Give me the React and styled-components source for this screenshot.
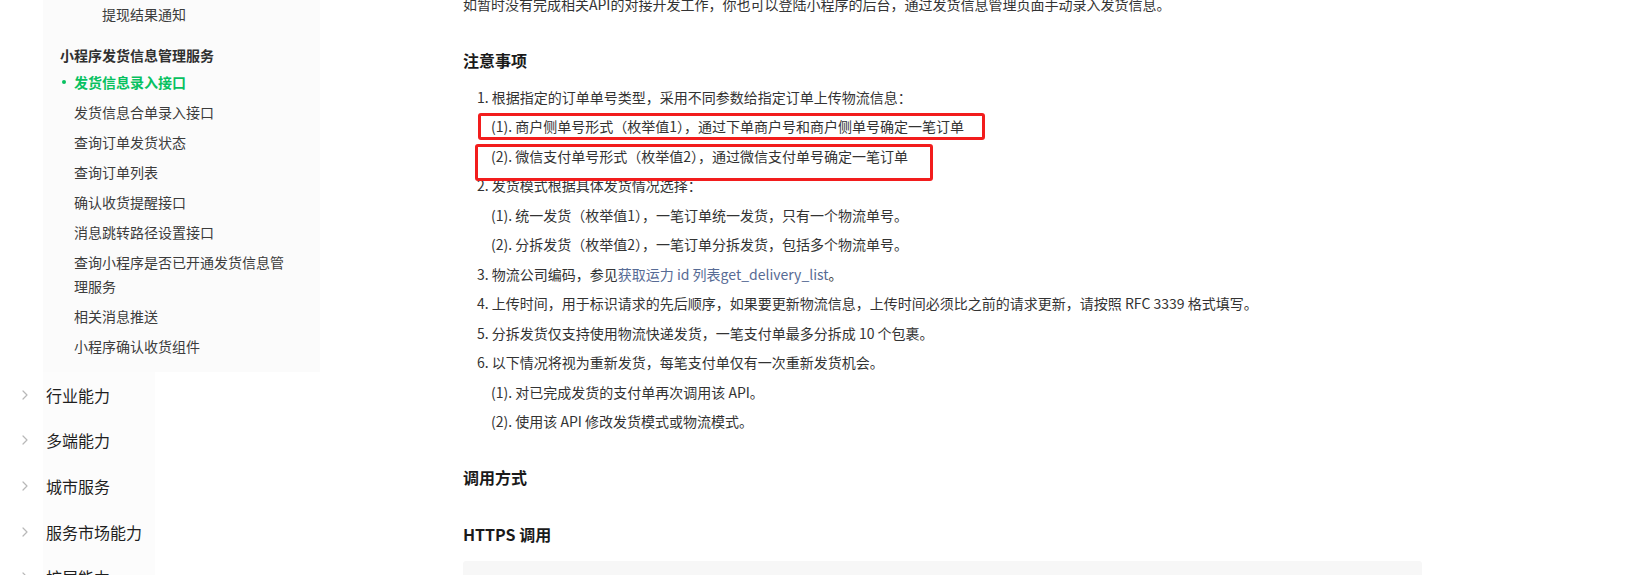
import React from "react";
import styled, { createGlobalStyle } from "styled-components";

const GlobalStyle = createGlobalStyle`
  html, body {
    margin: 0;
    padding: 0;
    background: #ffffff;
  }
  body {
    font-family: "Noto Sans CJK SC", "Microsoft YaHei", sans-serif;
    color: #333333;
    overflow: hidden;
  }
  * {
    box-sizing: border-box;
  }
`;

const Page = styled.div`
  display: flex;
  width: 1636px;
  height: 575px;
  overflow: hidden;
`;

const Sidebar = styled.nav`
  width: 320px;
  flex: none;
  display: flex;
  flex-direction: column;
`;

const SubPanel = styled.div`
  margin: -1px 0 0 43px;
  padding: 0 0 11px;
  background: #fbfbfb;
`;

const SubGroup = styled.div`
  margin-top: ${(p) => p.$top || 0}px;
`;

const GroupTitle = styled.div`
  padding-left: 17px;
  font-size: 14px;
  line-height: 24px;
  font-weight: 700;
  color: #303030;
`;

const SubLink = styled.div`
  position: relative;
  padding: 3px 30px 3px ${(p) => p.$indent}px;
  font-size: 14px;
  line-height: 24px;
  font-weight: ${(p) => (p.$active ? 700 : 400)};
  color: ${(p) => (p.$active ? "#07c160" : "#3c3c3c")};

  &::before {
    content: "";
    display: ${(p) => (p.$active ? "block" : "none")};
    position: absolute;
    left: 19px;
    top: 50%;
    width: 4px;
    height: 4px;
    margin-top: -2px;
    border-radius: 50%;
    background: #07c160;
  }
`;

const TopList = styled.div`
  display: flex;
  flex-direction: column;
  background: linear-gradient(
    90deg,
    #ffffff 0 43px,
    #fcfcfc 43px 155px,
    #ffffff 155px
  );
`;

const TopItem = styled.div`
  display: flex;
  align-items: center;
  height: 45.6px;
  flex: none;
  padding-left: 22px;
  gap: 18px;
  font-size: 16px;
  color: #1f1f1f;
`;

const Chevron = styled.svg`
  width: 6px;
  height: 10px;
  flex: none;
`;

const Main = styled.main`
  flex: 1;
  padding-left: 143px;
`;

const Content = styled.div`
  width: 959px;
`;

const Para = styled.p`
  margin: -10px 0 0;
  font-size: 14px;
  line-height: 29.5px;
  color: #333333;
  white-space: nowrap;
`;

const Heading = styled.h3`
  margin: ${(p) => p.$top}px 0 0;
  font-size: 16px;
  line-height: 24px;
  font-weight: 700;
  color: #1a1a1a;
`;

const ListBlock = styled.div`
  position: relative;
  margin-top: 11px;
`;

const Line = styled.div`
  padding-left: ${(p) => (p.$sub ? 28 : 14)}px;
  font-size: 14px;
  line-height: 29.5px;
  color: #333333;
  white-space: nowrap;
`;

const Link = styled.a`
  color: #576b95;
  text-decoration: none;
`;

const Mark = styled.div`
  position: absolute;
  left: ${(p) => p.$x}px;
  top: ${(p) => p.$y}px;
  width: ${(p) => p.$w}px;
  height: ${(p) => p.$h}px;
  border: 3px solid #f21d1d;
  border-radius: 3px;
  pointer-events: none;
`;

const CodeBlock = styled.div`
  margin-top: 15px;
  height: 120px;
  background: #f7f7f7;
  border-radius: 3px;
`;

const ChevronIcon = () => (
  <Chevron viewBox="0 0 6 10">
    <polyline
      points="1,1 5,5 1,9"
      fill="none"
      stroke="#b8b8b8"
      strokeWidth="1.2"
      strokeLinecap="round"
      strokeLinejoin="round"
    />
  </Chevron>
);

const subItems = [
  { text: "发货信息录入接口", active: true },
  { text: "发货信息合单录入接口" },
  { text: "查询订单发货状态" },
  { text: "查询订单列表" },
  { text: "确认收货提醒接口" },
  { text: "消息跳转路径设置接口" },
  { text: "查询小程序是否已开通发货信息管理服务" },
  { text: "相关消息推送" },
  { text: "小程序确认收货组件" },
];

const topItems = ["行业能力", "多端能力", "城市服务", "服务市场能力", "扩展能力"];

export default function App() {
  return (
    <>
      <GlobalStyle />
      <Page>
        <Sidebar>
          <SubPanel>
            <SubGroup>
              <SubLink $indent={59}>提现结果通知</SubLink>
            </SubGroup>
            <SubGroup $top={14}>
              <GroupTitle>小程序发货信息管理服务</GroupTitle>
              {subItems.map((it) => (
                <SubLink key={it.text} $indent={31} $active={it.active}>
                  {it.text}
                </SubLink>
              ))}
            </SubGroup>
          </SubPanel>
          <TopList>
            {topItems.map((t) => (
              <TopItem key={t}>
                <ChevronIcon />
                <span>{t}</span>
              </TopItem>
            ))}
          </TopList>
        </Sidebar>
        <Main>
          <Content>
            <Para>
              如暂时没有完成相关API的对接开发工作，你也可以登陆小程序的后台，通过发货信息管理页面手动录入发货信息。
            </Para>
            <Heading $top={28}>注意事项</Heading>
            <ListBlock>
              <Line>1. 根据指定的订单单号类型，采用不同参数给指定订单上传物流信息：</Line>
              <Line $sub>(1). 商户侧单号形式（枚举值1），通过下单商户号和商户侧单号确定一笔订单</Line>
              <Line $sub>(2). 微信支付单号形式（枚举值2），通过微信支付单号确定一笔订单</Line>
              <Line>2. 发货模式根据具体发货情况选择：</Line>
              <Line $sub>(1). 统一发货（枚举值1），一笔订单统一发货，只有一个物流单号。</Line>
              <Line $sub>(2). 分拆发货（枚举值2），一笔订单分拆发货，包括多个物流单号。</Line>
              <Line>
                3. 物流公司编码，参见<Link href="#">获取运力 id 列表get_delivery_list</Link>。
              </Line>
              <Line>
                4. 上传时间，用于标识请求的先后顺序，如果要更新物流信息，上传时间必须比之前的请求更新，请按照 RFC 3339 格式填写。
              </Line>
              <Line>5. 分拆发货仅支持使用物流快递发货，一笔支付单最多分拆成 10 个包裹。</Line>
              <Line>6. 以下情况将视为重新发货，每笔支付单仅有一次重新发货机会。</Line>
              <Line $sub>(1). 对已完成发货的支付单再次调用该 API。</Line>
              <Line $sub>(2). 使用该 API 修改发货模式或物流模式。</Line>
              <Mark $x={15} $y={30} $w={507} $h={27} />
              <Mark $x={12} $y={61} $w={458} $h={37} />
            </ListBlock>
            <Heading $top={28}>调用方式</Heading>
            <Heading $top={33}>HTTPS 调用</Heading>
            <CodeBlock />
          </Content>
        </Main>
      </Page>
    </>
  );
}
